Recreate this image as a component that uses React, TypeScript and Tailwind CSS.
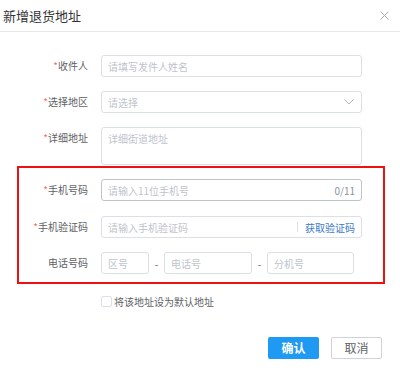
import React from 'react';

const inputCls =
  'h-[22px] rounded-[3px] border border-[#dcdfe6] bg-white px-[6px] text-[10px] text-[#606266] outline-none placeholder:text-[#c0c4cc]';

function Label({ text, required, width }: { text: string; required?: boolean; width: string }) {
  return (
    <div className={`${width} shrink-0 text-right text-[10px] leading-[22px] text-[#606266]`}>
      {required && <span className="text-[#f56c6c]">*</span>}
      {text}
    </div>
  );
}

export default function App() {
  return (
    <div
      className="h-[368px] w-[400px] bg-white"
      style={{ fontFamily: '"Noto Sans CJK SC", "Noto Sans", sans-serif' }}
    >
      {/* Header */}
      <div className="flex h-[32px] items-center justify-between border-b border-[#e8e8e8] pl-[3px] pr-[10px]">
        <span className="text-[13px] text-[#333]">新增退货地址</span>
        <svg width="9" height="9" viewBox="0 0 9 9" className="mr-[1px]">
          <path d="M0.5 0.5L8.5 8.5M8.5 0.5L0.5 8.5" stroke="#a8a8a8" strokeWidth="1" />
        </svg>
      </div>

      <div className="pt-[23px]">
        {/* 收件人 */}
        <div className="mb-[14px] flex items-center gap-[13px]">
          <Label text="收件人" required width="w-[88px]" />
          <input className={`${inputCls} w-[261px]`} placeholder="请填写发件人姓名" />
        </div>

        {/* 选择地区 */}
        <div className="mb-[14px] flex items-center gap-[13px]">
          <Label text="选择地区" required width="w-[88px]" />
          <div className="flex h-[22px] w-[261px] items-center justify-between rounded-[3px] border border-[#dcdfe6] px-[6px]">
            <span className="text-[10px] text-[#c0c4cc]">请选择</span>
            <svg width="10" height="6" viewBox="0 0 10 6" className="mr-[1px]">
              <path d="M0.5 0.5L5 5L9.5 0.5" fill="none" stroke="#b4b4b4" strokeWidth="1" />
            </svg>
          </div>
        </div>

        {/* 详细地址 */}
        <div className="mb-[1px] flex items-start gap-[13px]">
          <Label text="详细地址" required width="w-[88px]" />
          <textarea
            className="h-[38px] w-[261px] resize-none rounded-[3px] border border-[#dcdfe6] px-[6px] py-[4px] text-[10px] leading-[14px] outline-none placeholder:text-[#c0c4cc]"
            placeholder="详细街道地址"
          />
        </div>

        {/* Highlighted box */}
        <div className="ml-[17px] w-[368px] border-2 border-[#ee1111] pb-[8px] pt-[11px]">
          <div className="mb-[15px] flex items-center gap-[13px]">
            <Label text="手机号码" required width="w-[69px]" />
            <div className="flex h-[22px] w-[261px] items-center justify-between rounded-[3px] border border-[#bfc3ca] px-[6px]">
              <span className="text-[10px] text-[#c0c4cc]">请输入11位手机号</span>
              <span className="text-[10px] text-[#909399]">0/11</span>
            </div>
          </div>

          <div className="mb-[14px] flex items-center gap-[13px]">
            <Label text="手机验证码" required width="w-[69px]" />
            <div className="flex h-[22px] w-[261px] items-center justify-between rounded-[3px] border border-[#dcdfe6] pl-[6px] pr-[6px]">
              <span className="text-[10px] text-[#c0c4cc]">请输入手机验证码</span>
              <div className="flex items-center">
                <div className="mr-[7px] h-[10px] w-px bg-[#dcdfe6]" />
                <span className="text-[10px] text-[#3b7cc7]">获取验证码</span>
              </div>
            </div>
          </div>

          <div className="flex items-center gap-[13px]">
            <Label text="电话号码" width="w-[69px]" />
            <div className="flex items-center">
              <input className={`${inputCls} w-[48px]`} placeholder="区号" />
              <span className="w-[15px] text-center text-[10px] text-[#606266]">-</span>
              <input className={`${inputCls} w-[88px]`} placeholder="电话号" />
              <span className="w-[15px] text-center text-[10px] text-[#606266]">-</span>
              <input className={`${inputCls} w-[87px]`} placeholder="分机号" />
            </div>
          </div>
        </div>

        {/* Default checkbox */}
        <div className="ml-[101px] mt-[11px] flex h-[12px] items-center gap-[2px]">
          <span className="h-[11px] w-[11px] rounded-[2px] border border-[#dcdfe6] bg-white" />
          <span className="text-[10px] text-[#606266]">将该地址设为默认地址</span>
        </div>

        {/* Footer buttons */}
        <div className="mt-[30px] flex justify-end gap-[12px] pr-[18px]">
          <button className="h-[22px] w-[51px] rounded-[2px] bg-[#1e9af3] text-[12px] font-bold text-white">
            确认
          </button>
          <button className="h-[22px] w-[51px] rounded-[2px] border border-[#cfd2d8] bg-white text-[12px] text-[#606266]">
            取消
          </button>
        </div>
      </div>
    </div>
  );
}
